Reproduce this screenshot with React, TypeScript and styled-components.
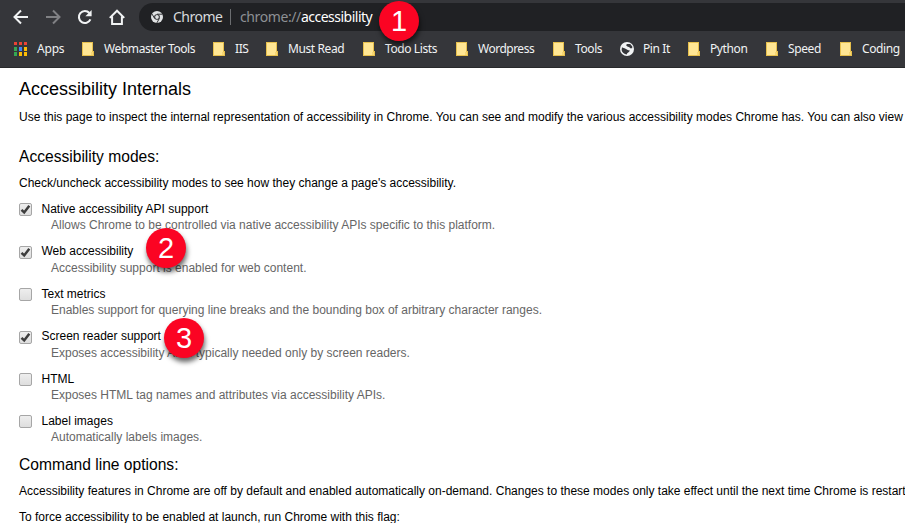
import React from "react";
import styled, { createGlobalStyle } from "styled-components";

const GlobalStyle = createGlobalStyle`
  * { box-sizing: border-box; }
  html, body { margin: 0; background: #fff; overflow: hidden; }
`;

const Page = styled.div`
  position: relative;
  width: 905px;
  height: 523px;
  overflow: hidden;
  background: #fff;
  color: #000;
  font-family: "Liberation Sans", Arial, sans-serif;
`;

const Chrome = styled.header`
  height: 68px;
  background: #35363a;
  border-bottom: 1px solid #28292b;
  font-family: "Noto Sans", "Open Sans", sans-serif;
`;

const Toolbar = styled.div`
  display: flex;
  align-items: flex-start;
  height: 31px;
  padding-top: 3px;
`;

const NavIcons = styled.nav`
  display: flex;
  gap: 16px;
  width: 139px;
  padding: 6px 0 0 13px;
  flex: none;
  svg { display: block; width: 16px; height: 16px; }
`;

const AddressBar = styled.div`
  display: flex;
  align-items: center;
  flex: 1;
  height: 28px;
  padding-left: 12px;
  border-radius: 14px 0 0 14px;
  background: #202124;
  font-size: 14px;
  line-height: 28px;
  white-space: pre;
  svg { display: block; flex: none; }
`;

const SiteName = styled.span`
  width: 49px;
  margin-left: 10px;
  color: #d8dadd;
  letter-spacing: -0.5px;
`;

const Divider = styled.i`
  width: 1px;
  height: 16px;
  margin: 0 9px 0 8px;
  background: #6b6d70;
`;

const Scheme = styled.span`
  color: #8d9094;
  letter-spacing: -0.4px;
`;

const Host = styled.span`
  color: #fff;
  letter-spacing: -0.5px;
`;

const Bookmarks = styled.div`
  display: flex;
  height: 36px;
  padding-left: 13px;
`;

const Bookmark = styled.div<{ $width: number; $spacing?: number }>`
  display: flex;
  align-items: center;
  flex: none;
  width: ${(p) => p.$width}px;
  font-size: 12px;
  line-height: 36px;
  letter-spacing: ${(p) => p.$spacing ?? -0.2}px;
  color: #f1f3f4;
  white-space: nowrap;
  svg { display: block; flex: none; }
`;

const BookmarkLabel = styled.span<{ $gap: number }>`
  margin-left: ${(p) => p.$gap}px;
`;

const Content = styled.main`
  padding: 10px 0 0 19px;
  white-space: nowrap;
`;

const Title = styled.h1`
  margin: 0;
  font-size: 18px;
  line-height: 22px;
  font-weight: 400;
`;

const Heading = styled.h2<{ $top: number }>`
  margin: ${(p) => p.$top}px 0 8px;
  font-size: 15.6px;
  line-height: 20px;
  font-weight: 400;
`;

const Paragraph = styled.p<{ $top?: number }>`
  margin: ${(p) => p.$top ?? 0}px 0 0;
  font-size: 12px;
  line-height: 16px;
`;

const Modes = styled.div`
  padding-top: 10px;
`;

const ModeRow = styled.div<{ $height: number }>`
  display: flex;
  gap: 9px;
  height: ${(p) => p.$height}px;
`;

const Box = styled.span<{ $top: number }>`
  display: flex;
  flex: none;
  width: 13px;
  height: 13px;
  margin-top: ${(p) => p.$top}px;
  border: 1px solid #a6a6a6;
  border-radius: 2px;
  background: linear-gradient(#eeeeee, #dedede);
  svg { display: block; overflow: visible; }
`;

const ModeLabel = styled.div`
  margin-left: 0.5px;
  font-size: 12px;
  line-height: 16px;
`;

const ModeDescription = styled.div<{ $top: number }>`
  margin: ${(p) => p.$top}px 0 0 10px;
  font-size: 12px;
  line-height: 16px;
  color: #666;
`;

const Badge = styled.span<{ $x: number; $y: number }>`
  position: absolute;
  left: ${(p) => p.$x}px;
  top: ${(p) => p.$y}px;
  width: 40px;
  height: 40px;
  border-radius: 50%;
  background: #fb0423;
  box-shadow: 1px 4px 5px rgba(0, 0, 0, 0.6);
  color: #fff;
  font-size: 29px;
  line-height: 41px;
  text-align: center;
`;

const Arrow = ({ forward = false }: { forward?: boolean }) => (
  <svg viewBox="0 0 16 16" fill="none" stroke={forward ? "#808184" : "#f1f3f4"} strokeWidth="2">
    {forward ? <path d="M1 8H14M8 1.5L14.5 8L8 14.5" /> : <path d="M15 8H2M8 1.5L1.5 8L8 14.5" />}
  </svg>
);

const Reload = () => (
  <svg viewBox="0 0 16 16">
    <path d="M13.4 10.4A6 6 0 1 1 12.4 4" fill="none" stroke="#f1f3f4" strokeWidth="2.1" />
    <path d="M14.6 1V7.2H8.4Z" fill="#f1f3f4" />
  </svg>
);

const Home = () => (
  <svg viewBox="0 0 16 16" fill="none" stroke="#f1f3f4" strokeWidth="2">
    <path d="M.8 8.9L8 1.7L15.2 8.9M3.1 7.5V14.9H12.9V7.5" />
  </svg>
);

const ChromeLogo = () => (
  <svg width="12" height="12" viewBox="0 0 12 12">
    <circle cx="6" cy="6" r="6" fill="#e0e2e4" />
    <path d="M6 3.2H11.4M3.6 7.4L.9 2.8M8.4 7.4L5.8 12" stroke="#202124" strokeWidth=".9" />
    <circle cx="6" cy="6" r="2.8" fill="#202124" />
    <circle cx="6" cy="6" r="1.9" fill="#e0e2e4" />
  </svg>
);

const Folder = () => (
  <svg width="12" height="14" viewBox="0 0 12 14">
    <path d="M0 0H11V9H12V14H0Z" fill="#e7c04d" />
    <path d="M1 1H10V10L9 11V13H1Z" fill="#ffe694" />
    <path d="M10 10H11V13H9V11Z" fill="#f7d774" />
  </svg>
);

const appColors = ["#ea4335", "#ea4335", "#ea4335", "#34a853", "#4285f4", "#fbbc05", "#34a853", "#fbbc05", "#fbbc05"];

const AppsGrid = () => (
  <svg width="14" height="14" viewBox="0 0 14 14" shapeRendering="crispEdges">
    {appColors.map((c, i) => (
      <rect key={i} x={1 + (i % 3) * 5} y={Math.floor(i / 3) * 5} width="3" height={i < 3 ? 3 : 4} fill={c} />
    ))}
  </svg>
);

const Globe = () => (
  <svg width="14" height="14" viewBox="0 0 14 14">
    <circle cx="7" cy="7" r="7" fill="#f1f3f4" />
    <path
      d="M2 5.2C3 6 4.3 5.9 5.5 6.7C7 7.5 7.7 8.4 9.7 8.3L9.2 9.8L7.2 11.2L6.8 12.4C4.2 12.4 2 10.3 1.6 8Z M6.8 2H10.2L12.3 4.6L12.2 6.2L10.2 6.2L9.4 5.3L7.4 4.6L6.2 3.6Z"
      fill="#35363a"
    />
  </svg>
);

const Check = () => (
  <svg width="11" height="11" viewBox="0 0 11 11">
    <path d="M1.5 5.8L4.2 8.4L9.3 1.8" fill="none" stroke="#3d3d3d" strokeWidth="2.5" />
  </svg>
);

const bookmarks = [
  { label: "Webmaster Tools", width: 131, spacing: -0.4 },
  { label: "IIS", width: 53, spacing: -0.4 },
  { label: "Must Read", width: 97, spacing: -0.4 },
  { label: "Todo Lists", width: 93, spacing: -0.4 },
  { label: "Wordpress", width: 97, spacing: -0.5 },
  { label: "Tools", width: 67, spacing: -0.4 },
  { label: "Pin It", width: 68, spacing: -0.4, globe: true },
  { label: "Python", width: 78, spacing: -0.4 },
  { label: "Speed", width: 74, spacing: -0.4 },
  { label: "Coding", width: 70, spacing: -0.4 },
];

const modes = [
  { label: "Native accessibility API support", text: "Allows Chrome to be controlled via native accessibility APIs specific to this platform.", on: true, height: 42, box: 2, gap: 0 },
  { label: "Web accessibility", text: "Accessibility support is enabled for web content.", on: true, height: 43, box: 3, gap: 1 },
  { label: "Text metrics", text: "Enables support for querying line breaks and the bounding box of arbitrary character ranges.", on: false, height: 42, box: 2, gap: 0 },
  { label: "Screen reader support", text: "Exposes accessibility APIs typically needed only by screen readers.", on: true, height: 43, box: 3, gap: 1 },
  { label: "HTML", text: "Exposes HTML tag names and attributes via accessibility APIs.", on: false, height: 42, box: 2, gap: 0 },
  { label: "Label images", text: "Automatically labels images.", on: false, height: 32, box: 2, gap: 0 },
];

export default function App() {
  return (
    <Page>
      <GlobalStyle />
      <Chrome>
        <Toolbar>
          <NavIcons>
            <Arrow />
            <Arrow forward />
            <Reload />
            <Home />
          </NavIcons>
          <AddressBar>
            <ChromeLogo />
            <SiteName>Chrome</SiteName>
            <Divider />
            <Scheme>chrome://</Scheme>
            <Host>accessibility</Host>
          </AddressBar>
        </Toolbar>
        <Bookmarks>
          <Bookmark $width={69}>
            <AppsGrid />
            <BookmarkLabel $gap={10}>Apps</BookmarkLabel>
          </Bookmark>
          {bookmarks.map((b) => (
            <Bookmark key={b.label} $width={b.width} $spacing={b.spacing}>
              {b.globe ? <Globe /> : <Folder />}
              <BookmarkLabel $gap={b.globe ? 9 : 10}>{b.label}</BookmarkLabel>
            </Bookmark>
          ))}
        </Bookmarks>
      </Chrome>
      <Content>
        <Title>Accessibility Internals</Title>
        <Paragraph $top={9}>
          Use this page to inspect the internal representation of accessibility in Chrome. You can see and modify the various accessibility modes Chrome has. You can also view
        </Paragraph>
        <Heading $top={22}>Accessibility modes:</Heading>
        <Paragraph>Check/uncheck accessibility modes to see how they change a page's accessibility.</Paragraph>
        <Modes>
          {modes.map((m) => (
            <ModeRow key={m.label} $height={m.height}>
              <Box $top={m.box}>{m.on && <Check />}</Box>
              <div>
                <ModeLabel>{m.label}</ModeLabel>
                <ModeDescription $top={m.gap}>{m.text}</ModeDescription>
              </div>
            </ModeRow>
          ))}
        </Modes>
        <Heading $top={10}>Command line options:</Heading>
        <Paragraph>
          Accessibility features in Chrome are off by default and enabled automatically on-demand. Changes to these modes only take effect until the next time Chrome is restart
        </Paragraph>
        <Paragraph $top={10}>To force accessibility to be enabled at launch, run Chrome with this flag:</Paragraph>
      </Content>
      <Badge $x={379} $y={1}>1</Badge>
      <Badge $x={146} $y={228}>2</Badge>
      <Badge $x={164} $y={318}>3</Badge>
    </Page>
  );
}
